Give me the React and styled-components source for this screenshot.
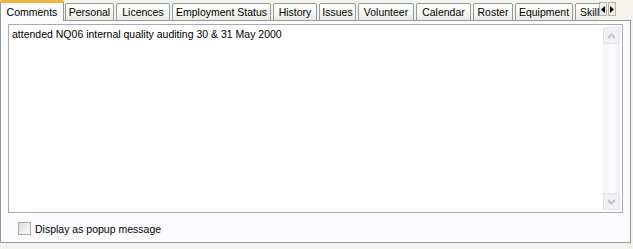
import styled, { createGlobalStyle } from "styled-components";

const Global = createGlobalStyle`
  html, body {
    margin: 0;
    padding: 0;
    background: #f4f3ee;
  }
  body {
    font-family: "Liberation Sans", Arial, sans-serif;
    font-size: 10.5px;
    color: #000;
  }
`;

const Frame = styled.div`
  width: 633px;
  height: 249px;
  display: flex;
  flex-direction: column;
  box-sizing: border-box;
  padding: 0 2px 6px 0;
`;

const Strip = styled.div`
  display: flex;
  align-items: flex-end;
  height: 21px;
  position: relative;
  z-index: 1;
`;

const TabList = styled.div`
  display: flex;
  align-items: flex-end;
  width: 599px;
  overflow: hidden;
  flex-shrink: 0;
`;

const Tab = styled.div`
  flex-shrink: 0;
  box-sizing: border-box;
  width: ${(p) => p.$w}px;
  height: ${(p) => (p.$active ? "21px" : "18px")};
  padding-top: ${(p) => (p.$active ? "3px" : "2px")};
  margin-right: ${(p) => (p.$active ? "1px" : "2px")};
  border: 1px solid #919b9c;
  border-bottom: ${(p) => (p.$active ? "none" : "1px solid #919b9c")};
  border-top: ${(p) => (p.$active ? "3px solid #f1b33d" : "1px solid #919b9c")};
  border-radius: 2px 2px 0 0;
  background: ${(p) =>
    p.$active ? "#fcfcfe" : "linear-gradient(#ffffff, #f3f3ef 70%, #e7e6df)"};
  line-height: 13px;
  text-align: ${(p) => (p.$clip ? "left" : "center")};
  padding-left: ${(p) => (p.$clip ? "4px" : "0")};
  white-space: nowrap;
  overflow: hidden;
  color: #000;
`;

const Arrows = styled.div`
  display: flex;
  align-self: flex-start;
  margin-top: 2px;
  gap: 1px;
`;

const ArrowBtn = styled.div`
  width: 8px;
  height: 14px;
  box-sizing: border-box;
  border: 1px solid #b5b2a6;
  background: #f4f3ee;
  display: flex;
  align-items: center;
  justify-content: center;
`;

const Panel = styled.div`
  flex: 1;
  margin-top: -1px;
  border: 1px solid #919b9c;
  background: #fcfcfe;
  display: flex;
  flex-direction: column;
  padding: 3px 7px 0 7px;
  box-sizing: border-box;
`;

const Memo = styled.div`
  height: 189px;
  box-sizing: border-box;
  border: 1px solid #a5acb2;
  background: #fff;
  display: flex;
`;

const MemoText = styled.div`
  flex: 1;
  padding: 3px 3px;
`;

const ScrollBar = styled.div`
  width: 17px;
  margin: 2px 2px 2px 0;
  display: flex;
  flex-direction: column;
  justify-content: space-between;
  background: linear-gradient(90deg, #f3f3f8, #fdfdfe 60%, #eeeef4);
`;

const ScrollBtn = styled.div`
  height: 17px;
  box-sizing: border-box;
  border: 1px solid #e2e2e6;
  border-radius: 2px;
  background: #f1f1f4;
  display: flex;
  align-items: center;
  justify-content: center;
`;

const CheckRow = styled.label`
  display: flex;
  align-items: center;
  gap: 4px;
  margin: 9px 0 0 10px;
`;

const Box = styled.span`
  width: 11px;
  height: 11px;
  border: 1px solid #a8a8a8;
  background: linear-gradient(135deg, #dcdcd7, #fdfdfb);
`;

const tabs = [
  ["Personal", 49],
  ["Licences", 54],
  ["Employment Status", 99],
  ["History", 44],
  ["Issues", 37],
  ["Volunteer", 56],
  ["Calendar", 55],
  ["Roster", 40],
  ["Equipment", 58],
];

function Chevron({ up }) {
  return (
    <svg width="9" height="6" viewBox="0 0 9 6">
      <path
        d={up ? "M1 5 L4.5 1.5 L8 5" : "M1 1 L4.5 4.5 L8 1"}
        fill="none"
        stroke="#c4c4c8"
        strokeWidth="2"
      />
    </svg>
  );
}

function Tri({ left }) {
  return (
    <svg width="4" height="7" viewBox="0 0 4 7">
      <path d={left ? "M4 0 L0 3.5 L4 7Z" : "M0 0 L4 3.5 L0 7Z"} fill="#000" />
    </svg>
  );
}

export default function App() {
  return (
    <Frame>
      <Global />
      <Strip>
        <TabList>
          <Tab $active $w={64}>
            Comments
          </Tab>
          {tabs.map(([t, w]) => (
            <Tab key={t} $w={w}>
              {t}
            </Tab>
          ))}
          <Tab $w={40} $clip>
            Skills
          </Tab>
        </TabList>
        <Arrows>
          <ArrowBtn>
            <Tri left />
          </ArrowBtn>
          <ArrowBtn>
            <Tri />
          </ArrowBtn>
        </Arrows>
      </Strip>
      <Panel>
        <Memo>
          <MemoText>attended NQ06 internal quality auditing 30 &amp; 31 May 2000</MemoText>
          <ScrollBar>
            <ScrollBtn>
              <Chevron up />
            </ScrollBtn>
            <ScrollBtn>
              <Chevron />
            </ScrollBtn>
          </ScrollBar>
        </Memo>
        <CheckRow>
          <Box />
          Display as popup message
        </CheckRow>
      </Panel>
    </Frame>
  );
}
